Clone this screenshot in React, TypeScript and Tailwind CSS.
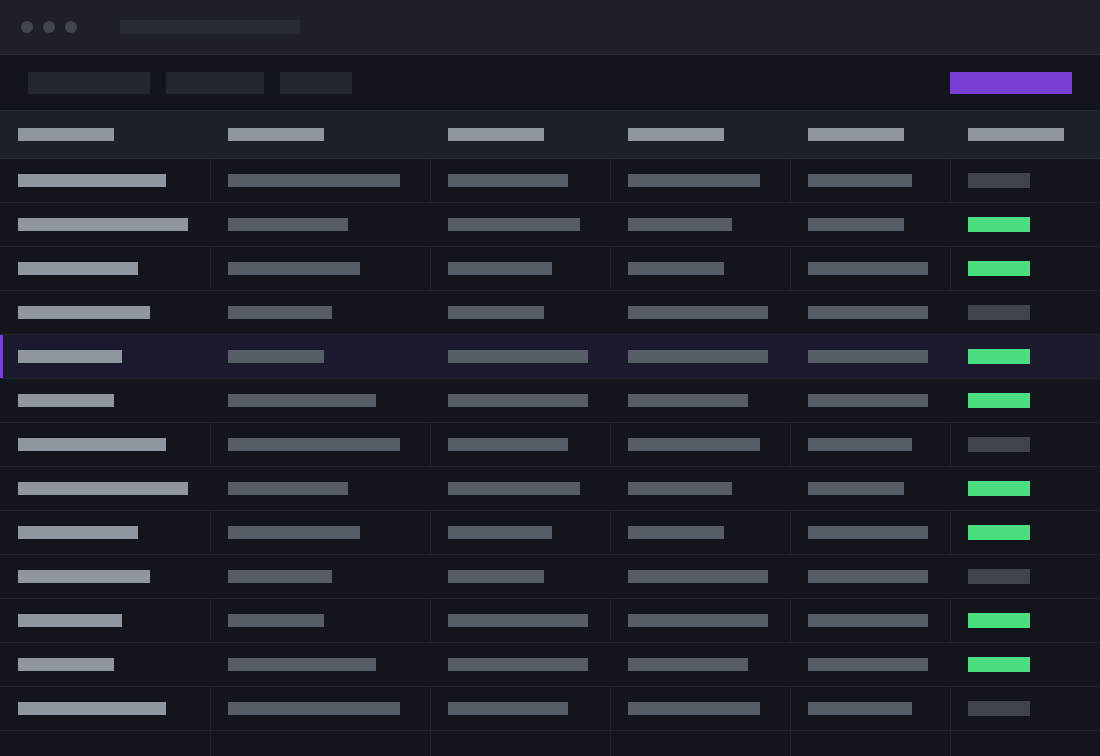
import React from "react";

type Row = { cols: number[]; active: boolean };

const colWidths = ["w-[210px]", "w-[220px]", "w-[180px]", "w-[180px]", "w-[160px]", "w-[150px]"];

const patterns: Row[] = [
  { cols: [148, 172, 120, 132, 104], active: false },
  { cols: [170, 120, 132, 104, 96], active: true },
  { cols: [120, 132, 104, 96, 120], active: true },
  { cols: [132, 104, 96, 140, 120], active: false },
  { cols: [104, 96, 140, 140, 120], active: true },
  { cols: [96, 148, 140, 120, 120], active: true },
];

const rows: Row[] = Array.from({ length: 13 }, (_, i) => patterns[i % 6]);

function Cell({ index, lined, children }: { index: number; lined: boolean; children?: React.ReactNode }) {
  const edge =
    index === 0
      ? "pl-[18px]"
      : lined
        ? "border-l border-[#1f232b] pl-[17px]"
        : "border-l border-transparent pl-[17px]";
  return <div className={`${colWidths[index]} ${edge} flex items-center shrink-0 h-full`}>{children}</div>;
}

function Bar({ width, light }: { width: number; light?: boolean }) {
  return <div className={`h-[13px] ${light ? "bg-[#8f96a0]" : "bg-[#575d66]"}`} style={{ width }} />;
}

export default function App() {
  return (
    <div className="h-screen w-full overflow-hidden bg-[#12151c] flex flex-col">
      {/* window chrome */}
      <div className="h-[55px] shrink-0 bg-[#1d2029] border-b border-[#2a2e37] flex items-center pl-[21px]">
        <div className="flex gap-[10px]">
          <span className="w-3 h-3 rounded-full bg-[#3f444d]" />
          <span className="w-3 h-3 rounded-full bg-[#3f444d]" />
          <span className="w-3 h-3 rounded-full bg-[#3f444d]" />
        </div>
        <div className="ml-[43px] w-[180px] h-[14px] bg-[#262a33]" />
      </div>

      {/* toolbar */}
      <div className="h-[56px] shrink-0 border-b border-[#262a33] flex items-center px-[28px]">
        <div className="flex gap-4">
          <div className="w-[122px] h-[22px] bg-[#22262e]" />
          <div className="w-[98px] h-[22px] bg-[#22262e]" />
          <div className="w-[72px] h-[22px] bg-[#22262e]" />
        </div>
        <div className="ml-auto w-[122px] h-[22px] bg-[#7b3fd8]" />
      </div>

      {/* header */}
      <div className="h-[48px] shrink-0 bg-[#1c2028] border-b border-[#2a2e37] flex">
        {colWidths.map((_, i) => (
          <div key={i} className={`${colWidths[i]} shrink-0 pl-[18px] flex items-center`}>
            <div className="w-24 h-[13px] bg-[#8f96a0]" />
          </div>
        ))}
      </div>

      {/* body */}
      <div className="flex-1 flex flex-col">
        {rows.map((r, i) => {
          const highlighted = i === 4;
          const lined = i % 2 === 0 && !highlighted;
          const bg = highlighted
            ? "bg-[#1b1a2d] shadow-[inset_3px_0_0_#7c3aed]"
            : i % 2 === 1
              ? "bg-[#13161d]"
              : "bg-[#12151c]";
          return (
            <div key={i} className={`h-[44px] shrink-0 flex border-b border-[#21252d] ${bg}`}>
              {r.cols.map((w, c) => (
                <Cell key={c} index={c} lined={lined}>
                  <Bar width={w} light={c === 0} />
                </Cell>
              ))}
              <Cell index={5} lined={lined}>
                <div className={`w-[62px] h-[15px] ${r.active ? "bg-[#4ade80]" : "bg-[#3f444c]"}`} />
              </Cell>
            </div>
          );
        })}
        <div className="h-[44px] shrink-0 flex">
          {colWidths.map((_, c) => (
            <Cell key={c} index={c} lined />
          ))}
        </div>
      </div>
    </div>
  );
}
